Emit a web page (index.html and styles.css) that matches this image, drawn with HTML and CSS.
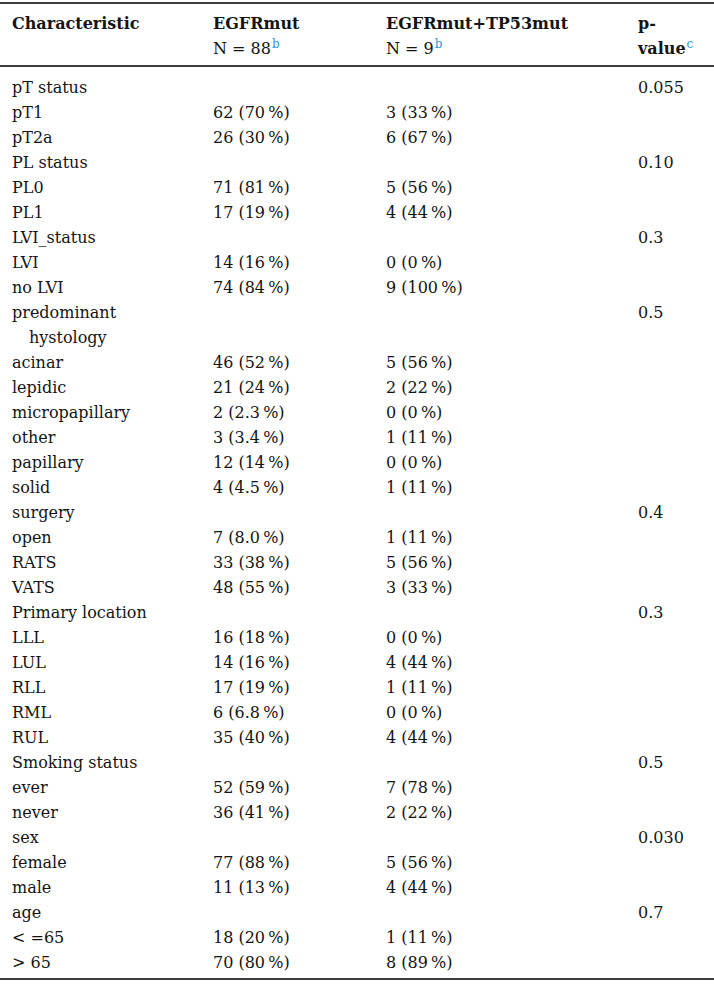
FILE: index.html
```html
<!DOCTYPE html>
<html lang="en">
<head>
<meta charset="utf-8">
<title>EGFRmut vs EGFRmut+TP53mut characteristics</title>
<link rel="stylesheet" href="styles.css">
</head>
<body>
<div class="wrap">
<table class="tbl">
  <colgroup>
    <col class="c1"><col class="c2"><col class="c3"><col class="c4">
  </colgroup>
  <thead>
    <tr>
      <th class="label">Characteristic</th>
      <th>EGFRmut<br><span class="n">N = 88<sup>b</sup></span></th>
      <th>EGFRmut+TP53mut<br><span class="n">N = 9<sup>b</sup></span></th>
      <th class="pv">p-value<sup>c</sup></th>
    </tr>
  </thead>
  <tbody>
    <tr><td class="label">pT status</td><td></td><td></td><td class="pv">0.055</td></tr>
    <tr><td class="label">pT1</td><td>62 (70&#8201;%)</td><td>3 (33&#8201;%)</td><td class="pv"></td></tr>
    <tr><td class="label">pT2a</td><td>26 (30&#8201;%)</td><td>6 (67&#8201;%)</td><td class="pv"></td></tr>
    <tr><td class="label">PL status</td><td></td><td></td><td class="pv">0.10</td></tr>
    <tr><td class="label">PL0</td><td>71 (81&#8201;%)</td><td>5 (56&#8201;%)</td><td class="pv"></td></tr>
    <tr><td class="label">PL1</td><td>17 (19&#8201;%)</td><td>4 (44&#8201;%)</td><td class="pv"></td></tr>
    <tr><td class="label">LVI_status</td><td></td><td></td><td class="pv">0.3</td></tr>
    <tr><td class="label">LVI</td><td>14 (16&#8201;%)</td><td>0 (0&#8201;%)</td><td class="pv"></td></tr>
    <tr><td class="label">no LVI</td><td>74 (84&#8201;%)</td><td>9 (100&#8201;%)</td><td class="pv"></td></tr>
    <tr><td class="label">predominant hystology</td><td></td><td></td><td class="pv">0.5</td></tr>
    <tr><td class="label">acinar</td><td>46 (52&#8201;%)</td><td>5 (56&#8201;%)</td><td class="pv"></td></tr>
    <tr><td class="label">lepidic</td><td>21 (24&#8201;%)</td><td>2 (22&#8201;%)</td><td class="pv"></td></tr>
    <tr><td class="label">micropapillary</td><td>2 (2.3&#8201;%)</td><td>0 (0&#8201;%)</td><td class="pv"></td></tr>
    <tr><td class="label">other</td><td>3 (3.4&#8201;%)</td><td>1 (11&#8201;%)</td><td class="pv"></td></tr>
    <tr><td class="label">papillary</td><td>12 (14&#8201;%)</td><td>0 (0&#8201;%)</td><td class="pv"></td></tr>
    <tr><td class="label">solid</td><td>4 (4.5&#8201;%)</td><td>1 (11&#8201;%)</td><td class="pv"></td></tr>
    <tr><td class="label">surgery</td><td></td><td></td><td class="pv">0.4</td></tr>
    <tr><td class="label">open</td><td>7 (8.0&#8201;%)</td><td>1 (11&#8201;%)</td><td class="pv"></td></tr>
    <tr><td class="label">RATS</td><td>33 (38&#8201;%)</td><td>5 (56&#8201;%)</td><td class="pv"></td></tr>
    <tr><td class="label">VATS</td><td>48 (55&#8201;%)</td><td>3 (33&#8201;%)</td><td class="pv"></td></tr>
    <tr><td class="label">Primary location</td><td></td><td></td><td class="pv">0.3</td></tr>
    <tr><td class="label">LLL</td><td>16 (18&#8201;%)</td><td>0 (0&#8201;%)</td><td class="pv"></td></tr>
    <tr><td class="label">LUL</td><td>14 (16&#8201;%)</td><td>4 (44&#8201;%)</td><td class="pv"></td></tr>
    <tr><td class="label">RLL</td><td>17 (19&#8201;%)</td><td>1 (11&#8201;%)</td><td class="pv"></td></tr>
    <tr><td class="label">RML</td><td>6 (6.8&#8201;%)</td><td>0 (0&#8201;%)</td><td class="pv"></td></tr>
    <tr><td class="label">RUL</td><td>35 (40&#8201;%)</td><td>4 (44&#8201;%)</td><td class="pv"></td></tr>
    <tr><td class="label">Smoking status</td><td></td><td></td><td class="pv">0.5</td></tr>
    <tr><td class="label">ever</td><td>52 (59&#8201;%)</td><td>7 (78&#8201;%)</td><td class="pv"></td></tr>
    <tr><td class="label">never</td><td>36 (41&#8201;%)</td><td>2 (22&#8201;%)</td><td class="pv"></td></tr>
    <tr><td class="label">sex</td><td></td><td></td><td class="pv">0.030</td></tr>
    <tr><td class="label">female</td><td>77 (88&#8201;%)</td><td>5 (56&#8201;%)</td><td class="pv"></td></tr>
    <tr><td class="label">male</td><td>11 (13&#8201;%)</td><td>4 (44&#8201;%)</td><td class="pv"></td></tr>
    <tr><td class="label">age</td><td></td><td></td><td class="pv">0.7</td></tr>
    <tr><td class="label">&lt; =65</td><td>18 (20&#8201;%)</td><td>1 (11&#8201;%)</td><td class="pv"></td></tr>
    <tr><td class="label">&gt; 65</td><td>70 (80&#8201;%)</td><td>8 (89&#8201;%)</td><td class="pv"></td></tr>
  </tbody>
</table>
</div>
</body>
</html>
```

FILE: styles.css
```css
html, body {
  margin: 0;
  padding: 0;
  background: #ffffff;
}

body {
  font-family: "DejaVu Serif", "Liberation Serif", serif;
  font-size: 16px;
  color: #141414;
}

.wrap {
  padding-top: 2px;
}

.tbl {
  width: 714px;
  border-collapse: collapse;
  table-layout: fixed;
  border-top: 2px solid #3d3d3d;
  border-bottom: 2px solid #3d3d3d;
  line-height: 25px;
}

.c1 { width: 205px; }
.c2 { width: 173px; }
.c3 { width: 252px; }
.c4 { width: 84px; }

.tbl th,
.tbl td {
  vertical-align: top;
  text-align: left;
  padding: 0 8px;
}

.tbl thead th {
  font-weight: bold;
  padding-top: 7px;
  padding-bottom: 4px;
  border-bottom: 2px solid #3d3d3d;
}

.tbl thead .n {
  font-weight: normal;
}

.tbl sup {
  color: #2d93d6;
  font-size: 12px;
  line-height: 0;
  vertical-align: 6px;
  font-weight: normal;
  margin-left: 1px;
}

.tbl .label {
  padding-left: 29px;
  padding-right: 20px;
  text-indent: -17px;
}

.tbl .pv {
  padding-left: 8px;
  padding-right: 12px;
}

.tbl tbody tr:first-child td {
  padding-top: 8px;
}

.tbl tbody tr:last-child td {
  padding-bottom: 3px;
}
```
